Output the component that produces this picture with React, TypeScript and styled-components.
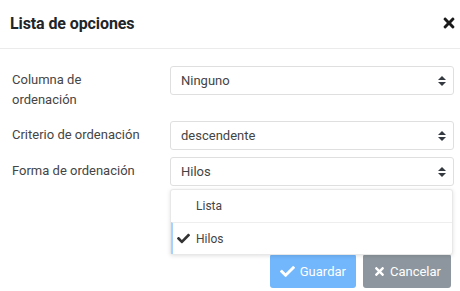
import React from "react";
import styled, { createGlobalStyle } from "styled-components";
import { FaCheck, FaTimes } from "react-icons/fa";

const Global = createGlobalStyle`
  html, body { margin: 0; padding: 0; background: #fff; }
  body { font-family: Roboto, "Liberation Sans", sans-serif; }
  * { box-sizing: border-box; }
`;

const Modal = styled.div`
  width: 460px;
  height: 291px;
  background: #fff;
  position: relative;
  overflow: hidden;
`;

const Header = styled.div`
  height: 49px;
  display: flex;
  align-items: center;
  justify-content: space-between;
  padding: 0 3px 2px 10px;
  border-bottom: 1px solid #ebebeb;
`;

const Title = styled.h5`
  margin: 0;
  font-size: 16px;
  font-weight: 700;
  color: #212529;
  letter-spacing: -0.1px;
`;

const Close = styled.button`
  border: 0;
  background: none;
  padding: 0;
  width: 16px;
  height: 16px;
  display: flex;
  align-items: center;
  justify-content: center;
  color: #1a1a1a;
  font-size: 16px;
`;

const Body = styled.div`
  padding: 17px 6px 0 12px;
  display: flex;
  flex-direction: column;
  gap: 7px;
`;

const Row = styled.div`
  display: grid;
  grid-template-columns: 150px 1fr;
  column-gap: 8px;
  align-items: start;
  position: relative;
`;

const Label = styled.label`
  padding: 4px 0;
  font-size: 13px;
  line-height: 20px;
  color: #454545;
`;

const SelectBox = styled.div`
  height: 29px;
  border: 1px solid #dfdfdf;
  border-radius: 3px;
  padding: 0 0 0 10px;
  display: flex;
  align-items: center;
  justify-content: space-between;
  font-size: 13px;
  color: #444;
  background: #fff;
`;

const Arrows = styled.svg`
  width: 8px;
  height: 10px;
  margin-right: 7px;
`;

const Menu = styled.ul`
  position: absolute;
  left: 158px;
  top: 32px;
  width: 283px;
  margin: 0;
  padding: 0;
  list-style: none;
  background: #fff;
  border: 1px solid #e8e8e8;
  border-radius: 3px;
  box-shadow: 0 1px 4px rgba(0, 0, 0, 0.12);
  z-index: 2;
`;

const Item = styled.li<{ $selected?: boolean }>`
  height: 32px;
  display: flex;
  align-items: center;
  padding-left: ${(p) => (p.$selected ? "4px" : "6px")};
  font-size: 12px;
  color: #444;
  border-left: ${(p) => (p.$selected ? "2px solid #a6d2ff" : "none")};
  & + & {
    border-top: 1px solid #eee;
  }
`;

const CheckSlot = styled.span`
  width: 19px;
  display: flex;
  align-items: center;
  color: #333;
  font-size: 13px;
`;

const Footer = styled.div`
  display: flex;
  justify-content: flex-end;
  gap: 7px;
  padding: 68px 9px 0 0;
`;

const Button = styled.button<{ $variant: "primary" | "secondary" }>`
  height: 34px;
  border: 0;
  border-radius: 3px;
  display: flex;
  align-items: center;
  gap: ${(p) => (p.$variant === "primary" ? "5px" : "4px")};
  padding: 0 10px;
  font-family: inherit;
  font-size: 13px;
  color: #fff;
  background: ${(p) => (p.$variant === "primary" ? "#72b6fb" : "#8d969e")};
`;

const Field = ({ label, value, children }: { label: React.ReactNode; value: string; children?: React.ReactNode }) => (
  <Row>
    <Label>{label}</Label>
    <SelectBox>
      {value}
      <Arrows viewBox="0 0 4 5">
        <path fill="#343a40" d="M2 0L0 2h4zm0 5L0 3h4z" />
      </Arrows>
    </SelectBox>
    {children}
  </Row>
);

export default function App() {
  return (
    <>
      <Global />
      <Modal>
        <Header>
          <Title>Lista de opciones</Title>
          <Close aria-label="Cerrar">
            <FaTimes />
          </Close>
        </Header>
        <Body>
          <Field label={<>Columna de<br />ordenación</>} value="Ninguno" />
          <Field label="Criterio de ordenación" value="descendente" />
          <Field label="Forma de ordenación" value="Hilos">
            <Menu>
              <Item>
                <CheckSlot />
                Lista
              </Item>
              <Item $selected>
                <CheckSlot>
                  <FaCheck />
                </CheckSlot>
                Hilos
              </Item>
            </Menu>
          </Field>
        </Body>
        <Footer>
          <Button $variant="primary">
            <FaCheck size={15} />
            Guardar
          </Button>
          <Button $variant="secondary">
            <FaTimes size={13} />
            Cancelar
          </Button>
        </Footer>
      </Modal>
    </>
  );
}
